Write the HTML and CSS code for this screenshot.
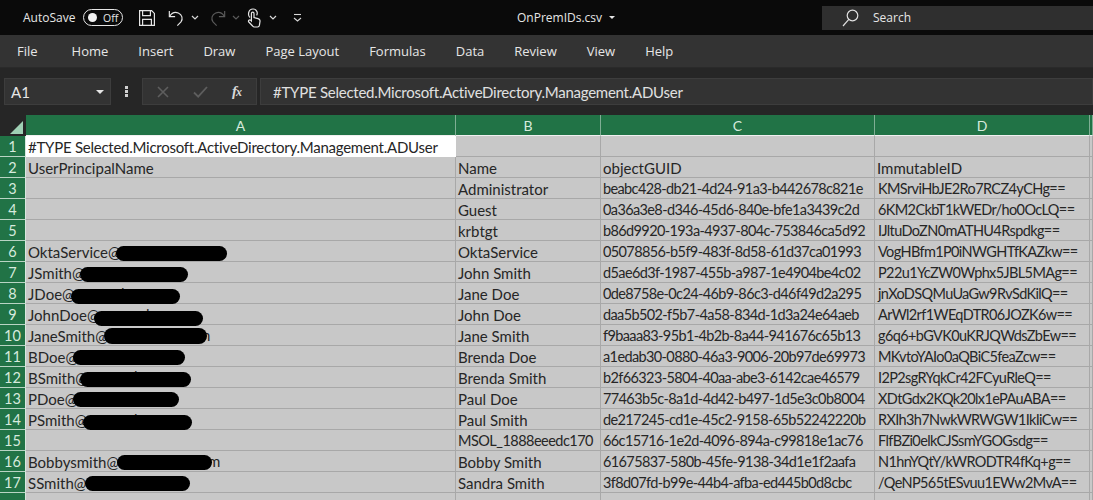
FILE: index.html
```html
<!DOCTYPE html>
<html lang="en">

<head>
    <meta charset="UTF-8">
    <meta name="viewport" content="width=device-width, initial-scale=1.0">
    <title>OnPremIDs.csv - Excel</title>
    <link rel="stylesheet" href="styles.css">
</head>

<body>

    <div class="titlebar">
        <span class="autosave">AutoSave</span>
        <span class="toggle"><span class="knob"></span><span class="toggle-text">Off</span></span>
        <svg class="qat save" width="18" height="18" viewBox="0 0 18 18" fill="none" stroke="#e6e6e6" stroke-width="1.2">
            <path d="M1.6 1.6H13.6L16.4 4.4V16.4H1.6Z" />
            <path d="M4.6 1.6V6.6H12.4V1.6" />
            <path d="M4.6 16.4V10.4H13.4V16.4" />
        </svg>
        <svg class="qat undo" width="16" height="18" viewBox="0 0 18 20" fill="none" stroke="#e6e6e6" stroke-width="1.3">
            <path d="M1.5 2V8.5H8" />
            <path d="M1.8 8.2C4 4.6 8 3 11.6 4.4C16 6.2 17 11 14.6 14.4L10.5 18.6" />
        </svg>
        <svg class="caret-s" width="8" height="5" viewBox="0 0 8 5" fill="none" stroke="#d8d8d8" stroke-width="1.2">
            <path d="M1 1L4 4L7 1" />
        </svg>
        <svg class="qat redo" width="16" height="18" viewBox="0 0 18 20" fill="none" stroke="#5a5a5a" stroke-width="1.3">
            <path d="M16.5 2V8.5H10" />
            <path d="M16.2 8.2C14 4.6 10 3 6.4 4.4C2 6.2 1 11 3.4 14.4L7.5 18.6" />
        </svg>
        <svg class="caret-s" width="8" height="5" viewBox="0 0 8 5" fill="none" stroke="#5a5a5a" stroke-width="1.2">
            <path d="M1 1L4 4L7 1" />
        </svg>
        <svg class="qat touch" width="14" height="20" viewBox="0 0 14 20" fill="none" stroke="#e6e6e6" stroke-width="1.2">
            <path d="M3 9.5C0.6 7.5 1 1 6 1C10.4 1 10.8 5.6 9.6 7.4" />
            <path d="M4.4 13V5.4C4.4 3.6 7 3.6 7 5.4V9.6L11 10.6C12.6 11 13.2 12 13 13.4L12.4 17.4C12.2 18.4 11.6 19 10.6 19H7.4C6.6 19 6 18.6 5.6 18L1.8 14C0.8 12.8 2.4 11.2 3.6 12.2Z" />
        </svg>
        <svg class="caret-s" width="8" height="5" viewBox="0 0 8 5" fill="none" stroke="#d8d8d8" stroke-width="1.2">
            <path d="M1 1L4 4L7 1" />
        </svg>
        <svg class="qat more" width="9" height="9" viewBox="0 0 9 9" fill="none" stroke="#d8d8d8" stroke-width="1.1">
            <path d="M1 1.5H8" />
            <path d="M1 5L4.5 8L8 5" />
        </svg>
        <span class="filename">OnPremIDs.csv</span>
        <span class="file-caret"></span>
        <div class="search">
            <svg width="17" height="18" viewBox="0 0 17 18" fill="none" stroke="#e0e0e0" stroke-width="1.2">
                <circle cx="10.5" cy="6.5" r="5.3" />
                <path d="M6.8 10.4L1 17" />
            </svg>
            <span>Search</span>
        </div>
    </div>

    <div class="tabs">
        <span class="tab-file">File</span>
        <span>Home</span>
        <span>Insert</span>
        <span>Draw</span>
        <span>Page Layout</span>
        <span>Formulas</span>
        <span>Data</span>
        <span>Review</span>
        <span>View</span>
        <span>Help</span>
    </div>

    <div class="formula-row">
        <div class="namebox">
            <span>A1</span>
            <span class="name-caret"></span>
        </div>
        <div class="dots"><i></i><i></i><i></i></div>
        <div class="fbuttons">
            <svg width="12" height="12" viewBox="0 0 12 12" fill="none" stroke="#5e5e5e" stroke-width="1.6">
                <path d="M1 1L11 11M11 1L1 11" />
            </svg>
            <svg width="15" height="12" viewBox="0 0 15 12" fill="none" stroke="#5e5e5e" stroke-width="1.8">
                <path d="M1 6.5L5.2 10.6L14 1" />
            </svg>
            <span class="fx">f<span class="fx-x">x</span></span>
        </div>
        <div class="finput"><span class="type-line">#TYPE Selected.Microsoft.ActiveDirectory.Management.ADUser</span></div>
    </div>

    <table class="sheet">
        <colgroup>
            <col class="c-head">
            <col class="c-a">
            <col class="c-b">
            <col class="c-c">
            <col class="c-d">
            <col class="c-e">
        </colgroup>
        <thead>
            <tr>
                <th class="corner"><span class="triangle"></span></th>
                <th>A</th>
                <th>B</th>
                <th>C</th>
                <th>D</th>
                <th></th>
            </tr>
        </thead>
        <tbody>
            <tr><th>1</th><td class="col-a active"><span class="type-line">#TYPE Selected.Microsoft.ActiveDirectory.Management.ADUser</span></td><td></td><td></td><td></td><td></td></tr>
            <tr><th>2</th><td class="col-a">UserPrincipalName</td><td>Name</td><td class="col-c">objectGUID</td><td>ImmutableID</td><td></td></tr>
            <tr><th>3</th><td class="col-a"></td><td>Administrator</td><td class="guid">beabc428-db21-4d24-91a3-b442678c821e</td><td class="immid">KMSrviHbJE2Ro7RCZ4yCHg==</td><td></td></tr>
            <tr><th>4</th><td class="col-a"></td><td>Guest</td><td class="guid">0a36a3e8-d346-45d6-840e-bfe1a3439c2d</td><td class="immid">6KM2CkbT1kWEDr/ho0OcLQ==</td><td></td></tr>
            <tr><th>5</th><td class="col-a"></td><td>krbtgt</td><td class="guid">b86d9920-193a-4937-804c-753846ca5d92</td><td class="immid">IJltuDoZN0mATHU4Rspdkg==</td><td></td></tr>
            <tr><th>6</th><td class="col-a">OktaService@<span class="pill p6"></span></td><td>OktaService</td><td class="guid">05078856-b5f9-483f-8d58-61d37ca01993</td><td class="immid">VogHBfm1P0iNWGHTfKAZkw==</td><td></td></tr>
            <tr><th>7</th><td class="col-a">JSmith@<span class="pill p7"></span></td><td>John Smith</td><td class="guid">d5ae6d3f-1987-455b-a987-1e4904be4c02</td><td class="immid">P22u1YcZW0Wphx5JBL5MAg==</td><td></td></tr>
            <tr><th>8</th><td class="col-a">JDoe@<span class="tail t8">l</span><span class="pill p8"></span></td><td>Jane Doe</td><td class="guid">0de8758e-0c24-46b9-86c3-d46f49d2a295</td><td class="immid">jnXoDSQMuUaGw9RvSdKilQ==</td><td></td></tr>
            <tr><th>9</th><td class="col-a">JohnDoe@<span class="tail t9">l</span><span class="pill p9"></span></td><td>John Doe</td><td class="guid">daa5b502-f5b7-4a58-834d-1d3a24e64aeb</td><td class="immid">ArWl2rf1WEqDTR06JOZK6w==</td><td></td></tr>
            <tr><th>10</th><td class="col-a">JaneSmith@<span class="tail t10">n</span><span class="pill p10"></span></td><td>Jane Smith</td><td class="guid">f9baaa83-95b1-4b2b-8a44-941676c65b13</td><td class="immid">g6q6+bGVK0uKRJQWdsZbEw==</td><td></td></tr>
            <tr><th>11</th><td class="col-a">BDoe@<span class="pill p11"></span></td><td>Brenda Doe</td><td class="guid">a1edab30-0880-46a3-9006-20b97de69973</td><td class="immid">MKvtoYAIo0aQBiC5feaZcw==</td><td></td></tr>
            <tr><th>12</th><td class="col-a">BSmith@<span class="tail t12">l</span><span class="pill p12"></span></td><td>Brenda Smith</td><td class="guid">b2f66323-5804-40aa-abe3-6142cae46579</td><td class="immid">I2P2sgRYqkCr42FCyuRleQ==</td><td></td></tr>
            <tr><th>13</th><td class="col-a">PDoe@<span class="pill p13"></span></td><td>Paul Doe</td><td class="guid">77463b5c-8a1d-4d42-b497-1d5e3c0b8004</td><td class="immid">XDtGdx2KQk20lx1ePAuABA==</td><td></td></tr>
            <tr><th>14</th><td class="col-a">PSmith@<span class="tail t14">l</span><span class="pill p14"></span></td><td>Paul Smith</td><td class="guid">de217245-cd1e-45c2-9158-65b52242220b</td><td class="immid">RXIh3h7NwkWRWGW1IkIiCw==</td><td></td></tr>
            <tr><th>15</th><td class="col-a"></td><td class="msol">MSOL_1888eeedc170</td><td class="guid">66c15716-1e2d-4096-894a-c99818e1ac76</td><td class="immid">FlfBZi0elkCJSsmYGOGsdg==</td><td></td></tr>
            <tr><th>16</th><td class="col-a">Bobbysmith@<span class="tail t16">m</span><span class="pill p16"></span></td><td>Bobby Smith</td><td class="guid">61675837-580b-45fe-9138-34d1e1f2aafa</td><td class="immid">N1hnYQtY/kWRODTR4fKq+g==</td><td></td></tr>
            <tr><th>17</th><td class="col-a">SSmith@<span class="pill p17"></span></td><td>Sandra Smith</td><td class="guid">3f8d07fd-b99e-44b4-afba-ed445b0d8cbc</td><td class="immid">/QeNP565tESvuu1EWw2MvA==</td><td></td></tr>
            <tr><th></th><td class="col-a"></td><td></td><td class="col-c"></td><td></td><td></td></tr>
        </tbody>
    </table>

</body>

</html>
```

FILE: styles.css
```css
html,
body {
    margin: 0;
    padding: 0;
    height: 500px;
    overflow: hidden;
}

body {
    background-color: #262626;
    font-family: "Open Sans", sans-serif;
    color: #e6e6e6;
}

/* title bar */
.titlebar {
    display: flex;
    align-items: center;
    height: 35px;
    padding-left: 23px;
    background-color: #0a0a0a;
    font-size: 12px;
}

.autosave {
    width: 60px;
}

.toggle {
    display: flex;
    align-items: center;
    box-sizing: border-box;
    width: 40px;
    height: 17px;
    border: 1px solid #e6e6e6;
    border-radius: 9px;
    padding-left: 4px;
    font-size: 10.5px;
}

.knob {
    width: 9px;
    height: 9px;
    border-radius: 50%;
    background-color: #f2f2f2;
}

.toggle-text {
    margin-left: 6px;
}

.save {
    margin-left: 15px;
}

.undo {
    margin-left: 12px;
}

.caret-s {
    margin-left: 7px;
}

.redo {
    margin-left: 11px;
}

.redo + .caret-s {
    margin-left: 6px;
}

.touch {
    margin-left: 7px;
}

.touch + .caret-s {
    margin-left: 8px;
}

.more {
    margin-left: 16px;
}

.filename {
    margin-left: 215px;
    width: 88px;
}

.file-caret {
    width: 0;
    height: 0;
    margin-left: 4px;
    border-left: 3px solid transparent;
    border-right: 3px solid transparent;
    border-top: 3px solid #e6e6e6;
}

.search {
    display: flex;
    align-items: center;
    gap: 14px;
    box-sizing: border-box;
    width: 271px;
    height: 24px;
    margin-left: auto;
    padding-left: 20px;
    background-color: #2f2f2f;
}

/* ribbon tabs */
.tabs {
    display: flex;
    align-items: center;
    gap: 30px;
    height: 32px;
    padding-left: 17px;
    background-color: #333333;
    border-bottom: 1px solid #2a2a2a;
    font-size: 13px;
}

.tab-file {
    margin-right: 4px;
}

/* formula bar */
.formula-row {
    display: flex;
    align-items: stretch;
    height: 27px;
    margin-top: 10px;
    padding-left: 4px;
}

.namebox {
    display: flex;
    align-items: center;
    justify-content: space-between;
    box-sizing: border-box;
    width: 107px;
    padding: 0 6px;
    background-color: #333333;
    border: 1px solid #3d3d3d;
    font-family: "Lato", sans-serif;
    font-size: 15px;
}

.name-caret {
    width: 0;
    height: 0;
    border-left: 4px solid transparent;
    border-right: 4px solid transparent;
    border-top: 4px solid #e6e6e6;
}

.dots {
    display: flex;
    flex-direction: column;
    justify-content: center;
    align-items: center;
    gap: 1px;
    width: 31px;
}

.dots i {
    width: 3px;
    height: 3px;
    background-color: #d0d0d0;
}

.fbuttons {
    display: flex;
    align-items: center;
    gap: 24px;
    box-sizing: border-box;
    width: 115px;
    padding-left: 14px;
    background-color: #333333;
    border: 1px solid #3d3d3d;
}

.fx {
    font-family: "Liberation Serif", serif;
    font-style: italic;
    font-weight: bold;
    font-size: 15px;
    color: #d8d8d8;
}

.fx-x {
    margin-left: -1px;
    font-size: 12px;
}

.finput {
    display: flex;
    align-items: center;
    flex: 1;
    margin-left: 3px;
    padding-left: 12px;
    background-color: #333333;
    border: 1px solid #3d3d3d;
    font-family: "Lato", sans-serif;
    font-size: 15px;
    color: #e0e0e0;
}

.type-line {
    letter-spacing: -0.25px;
}

/* worksheet */
.sheet {
    table-layout: fixed;
    border-collapse: separate;
    border-spacing: 0;
    width: 1093px;
    margin-top: 10px;
    background-color: #c8c8c8;
    font-family: "Lato", sans-serif;
    font-size: 15px;
    color: #262626;
}

.c-head {
    width: 26px;
}

.c-a {
    width: 430px;
}

.c-b {
    width: 145px;
}

.c-c {
    width: 274px;
}

.c-d {
    width: 215px;
}

.sheet thead th {
    height: 21px;
    padding: 0;
    background-color: #217346;
    border-right: 1px solid #7fae94;
    border-bottom: 1px solid #f0f0f0;
    box-sizing: border-box;
    font-weight: normal;
    font-size: 14px;
    color: #d6eadd;
}

.sheet .corner {
    position: relative;
    background-color: #262626;
    border-right: 1px solid #262626;
    border-bottom: none;
}

.triangle {
    position: absolute;
    right: 2px;
    bottom: 2px;
    width: 0;
    height: 0;
    border-left: 13px solid transparent;
    border-bottom: 13px solid #9fd0b4;
}

.sheet tbody th {
    box-sizing: border-box;
    height: 21px;
    padding: 0;
    background-color: #217346;
    border-right: 1px solid #d8e8de;
    border-bottom: 1px solid #b9d4c4;
    font-weight: normal;
    font-size: 14.5px;
    color: #d6eadd;
}

.sheet td {
    box-sizing: border-box;
    height: 21px;
    padding: 1px 0 0 2px;
    border-right: 1px solid #a8a8a8;
    border-bottom: 1px solid #a8a8a8;
    white-space: nowrap;
}

.sheet td.col-a {
    position: relative;
}

.sheet td.active {
    background-color: #ffffff;
    border-right: none;
    border-bottom: none;
}

.sheet td.col-c {
    padding-left: 2px;
}

.sheet td.guid {
    font-size: 14.5px;
    letter-spacing: -0.62px;
}

.sheet td.immid {
    padding-left: 3px;
    font-size: 14.5px;
    letter-spacing: -0.62px;
}

.sheet td.msol {
    font-size: 14.5px;
    letter-spacing: -0.53px;
}

/* blacked out domains */
.pill {
    position: absolute;
    height: 15px;
    border-radius: 8px;
    background-color: #000000;
}

.tail {
    position: absolute;
    top: 1px;
}

.t8 {
    left: 95px;
}

.t9 {
    left: 120px;
}

.t10 {
    left: 176px;
}

.t12 {
    left: 108px;
    top: 0;
}

.t14 {
    left: 108px;
}

.t16 {
    left: 182px;
}

.p6 {
    left: 90px;
    top: 5px;
    width: 111px;
}

.p7 {
    left: 54px;
    top: 5px;
    width: 108px;
}

.p8 {
    left: 45px;
    top: 6px;
    width: 109px;
}

.p9 {
    left: 68px;
    top: 7px;
    width: 109px;
}

.p10 {
    left: 78px;
    top: 3px;
    width: 103px;
    height: 16px;
}

.p11 {
    left: 47px;
    top: 4px;
    width: 112px;
}

.p12 {
    left: 54px;
    top: 5px;
    width: 111px;
}

.p13 {
    left: 47px;
    top: 4px;
    width: 106px;
}

.p14 {
    left: 57px;
    top: 6px;
    width: 109px;
}

.p16 {
    left: 91px;
    top: 4px;
    width: 95px;
}

.p17 {
    left: 59px;
    top: 4px;
    width: 105px;
}
```
